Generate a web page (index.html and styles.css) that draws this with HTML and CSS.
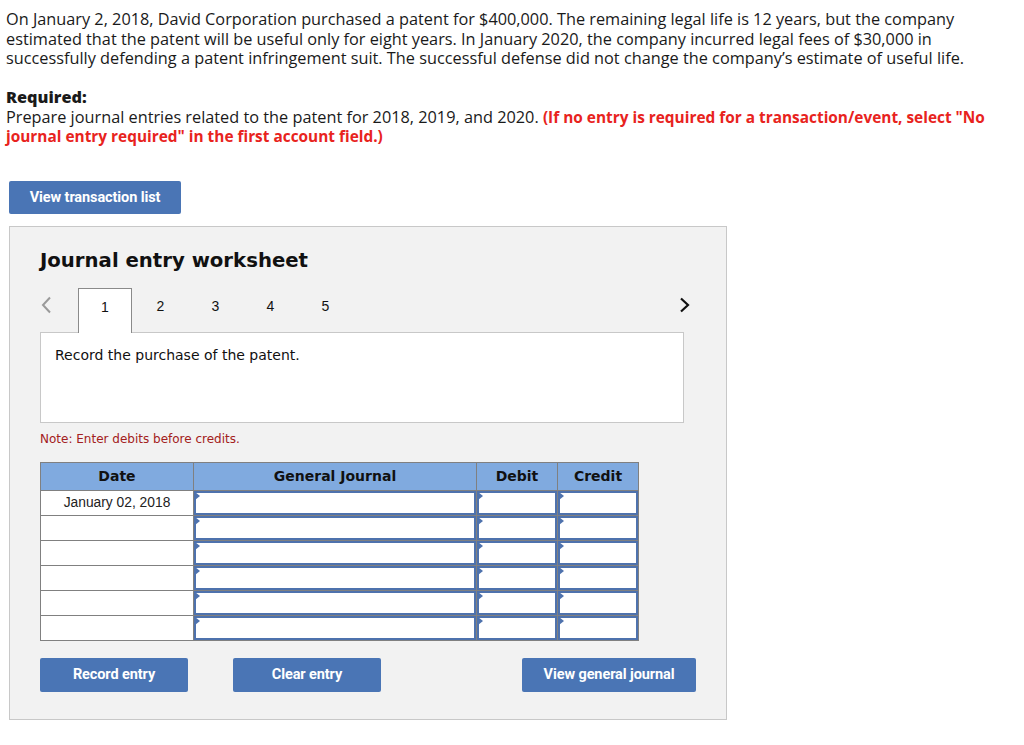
FILE: index.html
```html
<!DOCTYPE html>
<html lang="en">
<head>
    <meta charset="UTF-8">
    <title>Journal entry worksheet</title>
    <link rel="stylesheet" href="styles.css">
</head>
<body>
    <div class="question">
        <p class="intro">On January 2, 2018, David Corporation purchased a patent for $400,000. The remaining legal life is 12 years, but the company estimated that the patent will be useful only for eight years. In January 2020, the company incurred legal fees of $30,000 in successfully defending a patent infringement suit. The successful defense did not change the company’s estimate of useful life.</p>
        <p class="required"><strong>Required:</strong></p>
        <p>Prepare journal entries related to the patent for 2018, 2019, and 2020. <span class="hint">(If no entry is required for a transaction/event, select "No journal entry required" in the first account field.)</span></p>
    </div>

    <button class="btn btn-list">View transaction list</button>

    <div class="worksheet">
        <h2>Journal entry worksheet</h2>

        <div class="tabs">
            <span class="arrow prev">
                <svg width="12" height="18" viewBox="0 0 12 18"><path d="M10 1.5 L3 9 L10 16.5" fill="none" stroke="#9a9a9a" stroke-width="2"/></svg>
            </span>
            <span class="tab active">1</span>
            <span class="tab">2</span>
            <span class="tab">3</span>
            <span class="tab">4</span>
            <span class="tab">5</span>
            <span class="arrow next">
                <svg width="12" height="18" viewBox="0 0 12 18"><path d="M2 2.5 L9 9 L2 15.5" fill="none" stroke="#111" stroke-width="2.2"/></svg>
            </span>
        </div>
        <div class="task">Record the purchase of the patent.</div>

        <p class="note">Note: Enter debits before credits.</p>

        <table class="journal">
            <thead>
                <tr>
                    <th class="c-date">Date</th>
                    <th class="c-acct">General Journal</th>
                    <th class="c-num">Debit</th>
                    <th class="c-num">Credit</th>
                </tr>
            </thead>
            <tbody id="rows"></tbody>
        </table>

        <div class="actions">
            <button class="btn">Record entry</button>
            <button class="btn">Clear entry</button>
            <button class="btn btn-wide">View general journal</button>
        </div>
    </div>

    <script>
        const rows = document.getElementById('rows');
        for (let i = 0; i < 6; i++) {
            const tr = document.createElement('tr');
            const date = i === 0 ? 'January 02, 2018' : '';
            tr.innerHTML = `<td class="date">${date}</td>` +
                '<td><div class="field"></div></td>' +
                '<td><div class="field"></div></td>' +
                '<td><div class="field"></div></td>';
            rows.appendChild(tr);
        }
    </script>
</body>
</html>
```

FILE: styles.css
```css
body {
    margin: 0;
    padding: 10px 6px 0 6px;
    font-family: "Open Sans", Lato, sans-serif;
    color: #1a1a1a;
    background: #fff;
}
.question p {
    margin: 0;
    font-size: 16.3px;
    line-height: 19.5px;
    width: 990px;
}
.question .required {
    margin-top: 19.5px;
    font-weight: 700;
}
.hint {
    color: #e8231d;
    font-weight: 700;
    font-size: 15.4px;
}
.btn {
    background-color: #4a75b5;
    color: #fff;
    border: none;
    border-radius: 2px;
    font-family: Roboto, "Liberation Sans", sans-serif;
    font-weight: 700;
    font-size: 14.5px;
    letter-spacing: -0.1px;
    height: 34px;
    width: 148px;
    padding: 0;
    cursor: pointer;
}
.btn-list {
    display: block;
    margin: 34px 0 0 3px;
    width: 172px;
    height: 33px;
}
.worksheet {
    margin: 12px 0 0 3px;
    width: 686px;
    height: 492px;
    padding: 0 0 0 30px;
    background: #f2f2f2;
    border: 1px solid #c8c8c8;
    font-family: "DejaVu Sans", Verdana, sans-serif;
}
.worksheet h2 {
    margin: 20px 0 0 0;
    font-size: 19.7px;
    font-weight: 700;
    color: #111;
    line-height: 28px;
}
.tabs {
    display: flex;
    align-items: flex-end;
    margin-top: 13px;
    width: 644px;
    height: 44px;
    font-family: "Liberation Sans", Arial, sans-serif;
    font-size: 14px;
}
.tab {
    width: 55px;
    height: 44px;
    display: flex;
    align-items: center;
    justify-content: center;
    padding-bottom: 8px;
    box-sizing: border-box;
    color: #111;
}
.tab.active {
    background: #fff;
    border: 1px solid #8a8a8a;
    border-bottom: none;
    width: 54px;
    margin-right: 1px;
    position: relative;
    top: 1px;
    height: 45px;
}
.arrow {
    height: 44px;
    padding-bottom: 10px;
    box-sizing: border-box;
    display: flex;
    align-items: center;
}
.arrow.prev {
    width: 38px;
    padding-left: 0;
}
.arrow.next {
    margin-left: auto;
    margin-right: -7px;
}
.task {
    width: 644px;
    height: 91px;
    box-sizing: border-box;
    background: #fff;
    border: 1px solid #c8c8c8;
    padding: 14px 14px;
    font-size: 14px;
    color: #111;
}
.note {
    margin: 9px 0 0 0;
    font-size: 12px;
    color: #a32020;
}
.journal {
    margin-top: 16px;
    border-collapse: collapse;
    width: 597px;
    table-layout: fixed;
}
.journal th {
    background: #80aadf;
    height: 27px;
    border: 1px solid #808080;
    font-size: 14px;
    font-weight: 700;
    color: #111;
    padding: 0;
}
.c-date { width: 152px; }
.c-acct { width: 282px; }
.c-num { width: 80px; }
.journal td {
    background: #fff;
    border: 1px solid #808080;
    height: 24px;
    padding: 0;
}
.journal td.date {
    text-align: center;
    font-family: "Liberation Sans", Arial, sans-serif;
    font-size: 13.8px;
    color: #222;
}
.field {
    position: relative;
    height: 20px;
    border: 2px solid #4e72ad;
}
.field::before {
    content: '';
    position: absolute;
    top: -1px;
    left: -1px;
    border-top: 4px solid transparent;
    border-bottom: 4px solid transparent;
    border-left: 5px solid #4e72ad;
}
.actions {
    display: flex;
    margin-top: 17px;
    width: 656px;
}
.actions .btn + .btn {
    margin-left: 45px;
}
.actions .btn-wide {
    width: 174px;
    margin-left: auto !important;
}
```
